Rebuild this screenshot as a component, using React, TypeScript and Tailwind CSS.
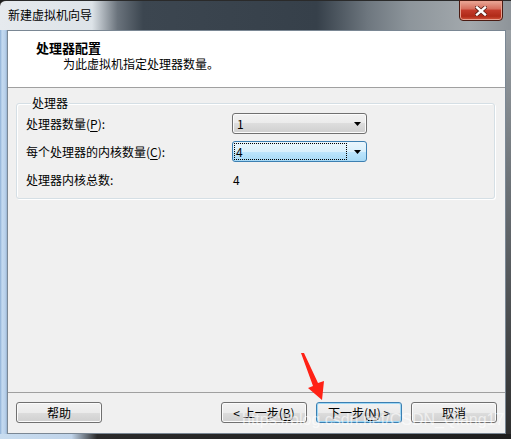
import clsx from 'clsx';

const Arrow = () => (
  <svg width="7" height="4" viewBox="0 0 7 4" className="shrink-0">
    <polygon points="0,0 7,0 3.5,4" fill="#000" />
  </svg>
);

const Button = ({ children, primary }: { children: React.ReactNode; primary?: boolean }) => (
  <button
    className={clsx(
      'flex h-[21px] w-[86px] items-center justify-center rounded-[3px] border text-[12px] leading-none text-black',
      primary
        ? 'border-[#3c7fb1] bg-[linear-gradient(180deg,#f2f2f2_0%,#ebebeb_50%,#dddddd_50%,#cfcfcf_100%)] shadow-[inset_0_0_0_1px_#9ed8f6]'
        : 'border-[#707070] bg-[linear-gradient(180deg,#f2f2f2_0%,#ebebeb_50%,#dddddd_50%,#cfcfcf_100%)] shadow-[inset_0_0_0_1px_#fbfbfb]'
    )}
  >
    {children}
  </button>
);

export default function App() {
  return (
    <div className="relative flex h-[439px] w-[511px] flex-col overflow-hidden bg-[#1e1e1e] font-['Noto_Sans_CJK_SC','Noto_Sans',sans-serif] text-black">
      {/* title bar */}
      <div className="flex h-[30px] shrink-0 items-start justify-between rounded-tl-[6px] border-t border-[#2a2a2a] bg-[linear-gradient(90deg,#e6eaee_0%,#dde3e8_18%,#6a737c_23%,#3c4650_28%,#36404a_62%,#6e777f_72%,#8d959b_80%,#a3a9ad_92%,#8e9499_100%)]">
        <span className="pl-[8px] pt-[7px] text-[12px] leading-[14px]">新建虚拟机向导</span>
        <div className="mr-[8px] mt-[-1px] flex h-[21px] w-[44px] items-center justify-center rounded-b-[4px] border border-[#4a1b12] bg-[linear-gradient(180deg,#e9a898_0%,#d6705f_40%,#c23a2a_50%,#b02a18_80%,#d2563d_100%)] shadow-[inset_0_0_0_1px_#e9a08f]">
          <svg width="12" height="10" viewBox="0 0 12 10">
            <path d="M2 1.5 L10 8.5 M10 1.5 L2 8.5" stroke="#5a2018" strokeWidth="4" strokeLinecap="square" />
            <path d="M2 1.5 L10 8.5 M10 1.5 L2 8.5" stroke="#fff" strokeWidth="2.4" strokeLinecap="square" />
          </svg>
        </div>
      </div>

      {/* frame + client */}
      <div className="flex min-h-0 flex-1">
        <div className="w-[7px] shrink-0 bg-[linear-gradient(90deg,#8eb0d6,#c4daf0_30%,#b8d0ea_75%,#98b3d0)]" />
        <div className="flex flex-1 flex-col border border-[#7a8794]">
          {/* header */}
          <div className="h-[57px] shrink-0 border-b border-[#a0a0a0] bg-white pt-[10px]">
            <div className="pl-[28px] text-[13px] font-bold leading-[14px]">处理器配置</div>
            <div className="mt-[2px] pl-[55px] text-[12px] leading-[14px]">为此虚拟机指定处理器数量。</div>
          </div>

          {/* body */}
          <div className="flex flex-1 flex-col bg-[#f0f0f0]">
            <fieldset className="ml-[8px] mr-[10px] mt-[8px] rounded-[3px] border border-[#d5dfe5] px-[9px] pb-[8px] pt-[3px] shadow-[inset_1px_1px_0_#fff,1px_1px_0_#fff]">
              <legend className="ml-[5px] bg-[#f0f0f0] px-[1px] text-[12px] leading-[14px]">处理器</legend>
              <div className="flex h-[21px] items-center text-[12px]">
                <span className="w-[206px]">
                  处理器数量(<u className="underline-offset-2">P</u>):
                </span>
                <div className="flex h-[21px] w-[135px] items-center rounded-[3px] border border-[#707070] bg-[linear-gradient(180deg,#f2f2f2_0%,#ebebeb_50%,#dddddd_50%,#cfcfcf_100%)] pl-[4px] pr-[5px] shadow-[inset_0_0_0_1px_#fbfbfb]">
                  <span className="flex-1 leading-none">1</span>
                  <Arrow />
                </div>
              </div>
              <div className="mt-[7px] flex h-[21px] items-center text-[12px]">
                <span className="w-[206px]">
                  每个处理器的内核数量(<u className="underline-offset-2">C</u>):
                </span>
                <div className="flex h-[21px] w-[135px] items-center rounded-[3px] border border-[#3c7fb1] bg-[linear-gradient(180deg,#eaf6fd_0%,#d9f0fc_50%,#bee6fd_50%,#a7d9f5_100%)] pl-[1px] pr-[5px]">
                  <span className="flex h-[17px] w-[113px] items-center border border-dotted border-black pl-[1px] leading-none">4</span>
                  <span className="flex-1" />
                  <Arrow />
                </div>
              </div>
              <div className="mt-[7px] flex h-[21px] items-center text-[12px]">
                <span className="w-[206px]">处理器内核总数:</span>
                <span className="pl-[1px]">4</span>
              </div>
            </fieldset>

            <div className="flex-1" />

            <div className="flex border-t border-[#a0a0a0] pb-[10px] pt-[9px]">
              <div className="ml-[8px]">
                <Button>帮助</Button>
              </div>
              <div className="flex-1" />
              <div className="mr-[8px] flex gap-[9px]">
                <Button>
                  &lt; 上一步(<u className="underline-offset-2">B</u>)
                </Button>
                <Button primary>
                  下一步(<u className="underline-offset-2">N</u>) &gt;
                </Button>
                <Button>取消</Button>
              </div>
            </div>
          </div>
        </div>
        <div className="w-[5px] shrink-0 bg-[linear-gradient(180deg,#9aa0a5,#6a7075_40%,#2e2e2e)]" />
      </div>
      <div className="h-[5px] shrink-0 bg-[linear-gradient(90deg,#c8dcef_0%,#c0d4ea_14%,#2a2a2a_19%,#1e1e1e_100%)]" />

      {/* annotation arrow */}
      <svg className="pointer-events-none absolute left-0 top-0" width="511" height="439">
        <polygon points="301,353 304,353 318,383 324,381 322,400 308,388 313,386" fill="#ff2216" />
      </svg>
      {/* watermark */}
      <span className="pointer-events-none absolute left-[242px] top-[411px] font-['Liberation_Sans',sans-serif] text-[16px] leading-[18px] text-white/60">
        https://blog.csdn.net/CSDN_Qiang17
      </span>
    </div>
  );
}
